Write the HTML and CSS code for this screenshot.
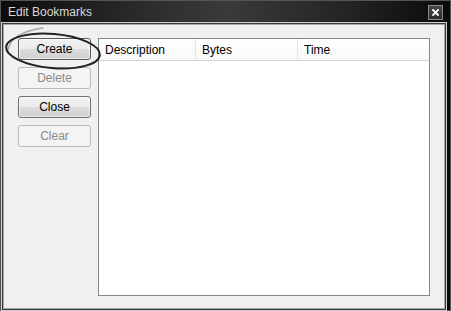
FILE: index.html
```html
<!DOCTYPE html>
<html>
<head>
<meta charset="utf-8">
<link rel="stylesheet" href="styles.css">
</head>
<body>
<div class="window">
  <div class="titlebar">
    <span class="title">Edit Bookmarks</span>
    <span class="close-btn">
      <svg width="7" height="7" viewBox="0 0 7 7"><path d="M1 1 L6 6 M6 1 L1 6" stroke="#fff" stroke-width="1.8" stroke-linecap="square"/></svg>
    </span>
  </div>
  <div class="client">
    <div class="buttons">
      <button class="btn btn-default">Create</button>
      <button class="btn" disabled>Delete</button>
      <button class="btn">Close</button>
      <button class="btn" disabled>Clear</button>
    </div>
    <div class="list">
      <div class="header">
        <div class="col col-desc">Description</div>
        <div class="col col-bytes">Bytes</div>
        <div class="col col-time">Time</div>
      </div>
      <div class="rows"></div>
    </div>
  </div>
  <svg class="annotation" width="110" height="80" viewBox="0 0 110 80">
    <path d="M7 49 C 9 38, 20 30, 42 27" fill="none" stroke="#a8a8a8" stroke-width="1.5" stroke-linecap="round"/>
    <ellipse cx="52" cy="50" rx="47" ry="17" transform="rotate(5 52 50)" fill="none" stroke="#222" stroke-width="2"/>
  </svg>
</div>
</body>
</html>
```

FILE: styles.css
```css
html, body {
  margin: 0;
  padding: 0;
  background: #000;
}
.window {
  position: relative;
  width: 451px;
  height: 311px;
  box-sizing: border-box;
  background: linear-gradient(90deg, #0c0c0c 0%, #2a2a2a 30%, #3a3a3a 50%, #262626 75%, #0a0a0a 100%);
  border: 1px solid #555;
  padding: 0 5px 1px 2px;
  display: flex;
  flex-direction: column;
  font-family: "Segoe UI", "Liberation Sans", Arial, sans-serif;
  font-size: 12px;
}
.titlebar {
  height: 23px;
  display: flex;
  align-items: center;
  justify-content: space-between;
  padding: 0 2px 0 5px;
}
.title {
  color: #d8d8d8;
  font-size: 12px;
  margin-top: -1px;
}
.close-btn {
  width: 13px;
  height: 13px;
  border: 1px solid #8a8a8a;
  background: linear-gradient(#4a4a4a, #2a2a2a);
  display: flex;
  align-items: center;
  justify-content: center;
}
.client {
  flex: 1;
  background: #f0f0f0;
  border: 1px solid #a8a8a8;
  box-shadow: 0 0 0 1px #3c3c3c, 0 0 0 2px #cfcfcf;
  display: flex;
  gap: 7px;
  padding: 13px 14px 12px 14px;
}
.buttons {
  width: 73px;
  display: flex;
  flex-direction: column;
  gap: 7px;
}
.btn {
  height: 22px;
  box-sizing: border-box;
  border: 1px solid #707070;
  border-radius: 3px;
  background: linear-gradient(#f2f2f2 0%, #ebebeb 50%, #dddddd 51%, #cfcfcf 100%);
  font-family: "Segoe UI", "Liberation Sans", Arial, sans-serif;
  font-size: 12px;
  color: #000;
  padding: 0;
  box-shadow: inset 0 0 0 1px rgba(255,255,255,0.6);
}
.btn-default {
  border-color: #5a5a5a;
}
.btn:disabled {
  border-color: #b8bcbf;
  background: #f4f4f4;
  color: #8a8a8a;
  box-shadow: none;
}
.list {
  flex: 1;
  background: #fff;
  border: 1px solid #828790;
  display: flex;
  flex-direction: column;
}
.header {
  height: 21px;
  display: flex;
  background: linear-gradient(#ffffff, #f7f8f9);
  border-bottom: 1px solid #d5d5d5;
}
.col {
  box-sizing: border-box;
  padding-left: 6px;
  line-height: 22px;
  color: #000;
  border-right: 1px solid #e3e5e7;
}
.col-desc { width: 97px; }
.col-bytes { width: 102px; }
.col-time { flex: 1; border-right: none; }
.rows { flex: 1; }
.annotation {
  position: absolute;
  left: 0;
  top: 0;
}
```
